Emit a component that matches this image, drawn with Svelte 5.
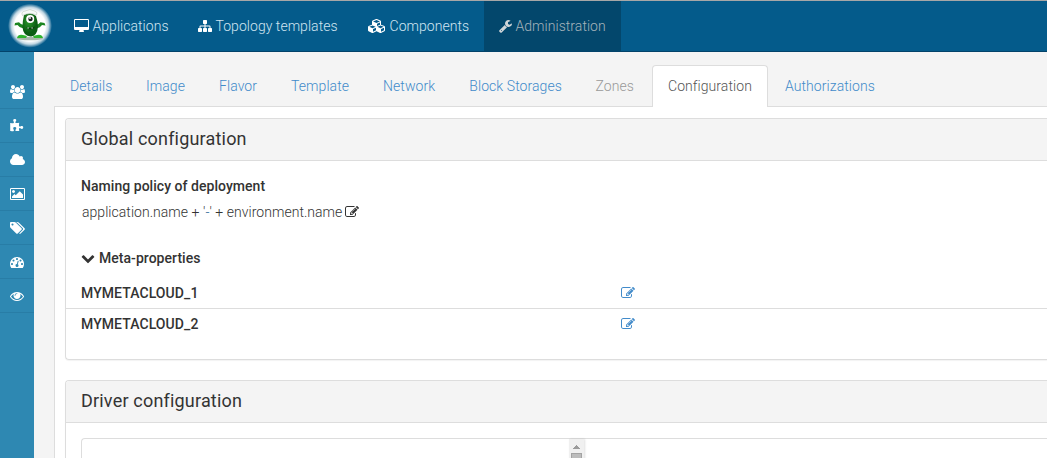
<script>
  const icons = {
    desktop: ['-64 0 1920 1792', 15, 'M1728 992v-832q0-13-9.5-22.5t-22.5-9.5h-1600q-13 0-22.5 9.5t-9.5 22.5v832q0 13 9.5 22.5t22.5 9.5h1600q13 0 22.5-9.5t9.5-22.5zm128-832v1088q0 66-47 113t-113 47h-544q0 37 16 77.5t32 71 16 43.5q0 26-19 45t-45 19h-512q-26 0-45-19t-19-45q0-14 16-44t32-70 16-78h-544q-66 0-113-47t-47-113v-1088q0-66 47-113t113-47h1600q66 0 113 47t47 113z'],
    sitemap: ['0 0 1792 1792', 14, 'M1792 1248v320q0 40-28 68t-68 28h-320q-40 0-68-28t-28-68v-320q0-40 28-68t68-28h96v-192h-512v192h96q40 0 68 28t28 68v320q0 40-28 68t-68 28h-320q-40 0-68-28t-28-68v-320q0-40 28-68t68-28h96v-192h-512v192h96q40 0 68 28t28 68v320q0 40-28 68t-68 28h-320q-40 0-68-28t-28-68v-320q0-40 28-68t68-28h96v-192q0-52 38-90t90-38h512v-192h-96q-40 0-68-28t-28-68v-320q0-40 28-68t68-28h320q40 0 68 28t28 68v320q0 40-28 68t-68 28h-96v192h512q52 0 90 38t38 90v192h96q40 0 68 28t28 68z'],
    cubes: ['0 0 2304 1792', 18, 'M640 1632l384-192v-314l-384 164v342zm-64-454l404-173-404-173-404 173zm1088 454l384-192v-314l-384 164v342zm-64-454l404-173-404-173-404 173zm-448-293l384-165v-266l-384 164v267zm-64-379l441-189-441-189-441 189zm1088 518v416q0 36-19 67t-52 47l-448 224q-25 14-57 14t-57-14l-448-224q-4-2-7-4-2 2-7 4l-448 224q-25 14-57 14t-57-14l-448-224q-33-16-52-47t-19-67v-416q0-38 21.5-70t56.5-48l434-186v-400q0-38 21.5-70t56.5-48l448-192q23-10 50-10t50 10l448 192q35 16 56.5 48t21.5 70v400l434 186q36 16 57 48t21 70z'],
    wrench: ['64 0 1664 1792', 13, 'M448 1472q0-26-19-45t-45-19-45 19-19 45 19 45 45 19 45-19 19-45zm644-420l-682 682q-37 37-90 37-52 0-91-37l-106-108q-38-36-38-90 0-53 38-91l681-681q39 98 114.5 173.5t173.5 114.5zm634-435q0 39-23 106-47 134-164.5 217.5t-258.5 83.5q-185 0-316.5-131.5t-131.5-316.5 131.5-316.5 316.5-131.5q58 0 121.5 16.5t107.5 46.5q16 11 16 28t-16 28l-293 169v224l193 107q5-3 79-48.5t135.5-81 70.5-35.5q15 0 23.5 10t8.5 25z'],
    users: ['0 0 1920 1792', 15, 'M593 896q-162 5-265 128h-134q-82 0-138-40.5t-56-118.5q0-353 124-353 6 0 43.5 21t97.5 42.5 119 21.5q67 0 133-23-5 37-5 66 0 139 81 256zm1071 637q0 120-73 189.5t-194 69.5h-874q-121 0-194-69.5t-73-189.5q0-53 3.5-103.5t14-109 26.5-108.5 43-97.5 62-81 85.5-53.5 111.5-20q10 0 43 21.5t73 48 107 48 135 21.5 135-21.5 107-48 73-48 43-21.5q61 0 111.5 20t85.5 53.5 62 81 43 97.5 26.5 108.5 14 109 3.5 103.5zm-1024-1277q0 106-75 181t-181 75-181-75-75-181 75-181 181-75 181 75 75 181zm704 384q0 159-112.5 271.5t-271.5 112.5-271.5-112.5-112.5-271.5 112.5-271.5 271.5-112.5 271.5 112.5 112.5 271.5zm576 225q0 78-56 118.5t-138 40.5h-134q-103-123-265-128 81-117 81-256 0-29-5-66 66 23 133 23 59 0 119-21.5t97.5-42.5 43.5-21q124 0 124 353zm-128-609q0 106-75 181t-181 75-181-75-75-181 75-181 181-75 181 75 75 181z'],
    puzzle: ['64 0 1792 1792', 14, 'M1755 1083q0 81-44.5 135t-123.5 54q-41 0-77.5-17.5t-59-38-56.5-38-71-17.5q-110 0-110 124 0 39 16 115t15 115v5q-22 0-33 1-34 3-97.5 11.5t-115.5 13.5-98 5q-61 0-103-26.5t-42-83.5q0-37 17.5-71t38-56.5 38-59 17.5-77.5q0-79-54-123.5t-135-44.5q-84 0-143 45.5t-59 127.5q0 43 15 83t33.5 64.5 33.5 53 15 50.5q0 45-46 89-37 35-117 35-95 0-245-24-9-2-27.5-4t-27.5-4l-13-2q-1 0-3-1-2 0-2-1v-1024q2 1 17.5 3.5t34 5 21.5 3.5q150 24 245 24 80 0 117-35 46-44 46-89 0-22-15-50.5t-33.5-53-33.5-64.5-15-83q0-82 59-127.5t144-45.5q80 0 134 44.5t54 123.5q0 41-17.5 77.5t-38 59-38 56.5-17.5 71q0 57 42 83.5t103 26.5q64 0 180-15t163-17v2q-1 2-3.5 17.5t-5 34-3.5 21.5q-24 150-24 245 0 80 35 117 44 46 89 46 22 0 50.5-15t53-33.5 64.5-33.5 83-15q82 0 127.5 59t45.5 143z'],
    cloud: ['64 0 1920 1792', 15, 'M1984 1152q0 159-112.5 271.5t-271.5 112.5h-1088q-185 0-316.5-131.5t-131.5-316.5q0-132 71-241.5t187-163.5q-2-28-2-43 0-212 150-362t362-150q158 0 286.5 88t187.5 230q70-62 166-62 106 0 181 75t75 181q0 75-41 138 129 30 213 134.5t84 239.5z'],
    picture: ['-64 0 1920 1792', 15, 'M576 576q0 80-56 136t-136 56-136-56-56-136 56-136 136-56 136 56 56 136zm1024 384v448h-1408v-192l320-320 160 160 512-512zm96-704h-1600q-13 0-22.5 9.5t-9.5 22.5v1216q0 13 9.5 22.5t22.5 9.5h1600q13 0 22.5-9.5t9.5-22.5v-1216q0-13-9.5-22.5t-22.5-9.5zm160 32v1216q0 66-47 113t-113 47h-1600q-66 0-113-47t-47-113v-1216q0-66 47-113t113-47h1600q66 0 113 47t47 113z'],
    tags: ['0 0 1920 1792', 15, 'M448 448q0-53-37.5-90.5t-90.5-37.5-90.5 37.5-37.5 90.5 37.5 90.5 90.5 37.5 90.5-37.5 37.5-90.5zm1067 576q0 53-37 90l-491 492q-39 37-91 37-53 0-90-37l-715-716q-38-37-64.5-101t-26.5-117v-416q0-52 38-90t90-38h416q53 0 117 26.5t102 64.5l715 714q37 39 37 91zm384 0q0 53-37 90l-491 492q-39 37-91 37-36 0-59-14t-53-45l470-470q37-37 37-90 0-52-37-91l-715-714q-38-38-102-64.5t-117-26.5h224q53 0 117 26.5t102 64.5l715 714q37 39 37 91z'],
    gauge: ['0 0 1792 1792', 14, 'M384 1152q0-53-37.5-90.5t-90.5-37.5-90.5 37.5-37.5 90.5 37.5 90.5 90.5 37.5 90.5-37.5 37.5-90.5zm192-448q0-53-37.5-90.5t-90.5-37.5-90.5 37.5-37.5 90.5 37.5 90.5 90.5 37.5 90.5-37.5 37.5-90.5zm428 481l101-382q6-26-7.5-48.5t-38.5-29.5-48 6.5-30 39.5l-101 382q-60 5-107 43.5t-63 98.5q-20 77 20 146t117 89 146-20 89-117q16-60-6-117t-72-91zm660-33q0-53-37.5-90.5t-90.5-37.5-90.5 37.5-37.5 90.5 37.5 90.5 90.5 37.5 90.5-37.5 37.5-90.5zm-640-640q0-53-37.5-90.5t-90.5-37.5-90.5 37.5-37.5 90.5 37.5 90.5 90.5 37.5 90.5-37.5 37.5-90.5zm448 192q0-53-37.5-90.5t-90.5-37.5-90.5 37.5-37.5 90.5 37.5 90.5 90.5 37.5 90.5-37.5 37.5-90.5zm320 448q0 261-141 483-19 29-54 29h-1402q-35 0-54-29-141-221-141-483 0-182 71-348t191-286 286-191 348-71 348 71 286 191 191 286 71 348z'],
    eye: ['0 0 1792 1792', 14, 'M1664 960q-152-236-381-353 61 104 61 225 0 185-131.5 316.5t-316.5 131.5-316.5-131.5-131.5-316.5q0-121 61-225-229 117-381 353 133 205 333.5 326.5t434.5 121.5 434.5-121.5 333.5-326.5zm-720-384q0-20-14-34t-34-14q-125 0-214.5 89.5t-89.5 214.5q0 20 14 34t34 14 34-14 14-34q0-86 61-147t147-61q20 0 34-14t14-34zm848 384q0 34-20 69-140 230-376.5 368.5t-499.5 138.5-499.5-139-376.5-368q-20-35-20-69t20-69q140-229 376.5-368t499.5-139 499.5 139 376.5 368q20 35 20 69z'],
    edit: ['0 0 1792 1792', 14, 'M888 1184l116-116-152-152-116 116v56h96v96h56zm440-720q-16-16-33 1l-350 350q-17 17-1 33t33-1l350-350q17-17 1-33zm80 594v190q0 119-84.5 203.5t-203.5 84.5h-832q-119 0-203.5-84.5t-84.5-203.5v-832q0-119 84.5-203.5t203.5-84.5h832q63 0 117 25 15 7 18 23 3 17-9 29l-49 49q-14 14-32 8-23-6-45-6h-832q-66 0-113 47t-47 113v832q0 66 47 113t113 47h832q66 0 113-47t47-113v-126q0-13 9-22l64-64q15-15 35-7t20 29zm-96-738l288 288-672 672h-288v-288zm444 132l-92 92-288-288 92-92q28-28 68-28t68 28l152 152q28 28 28 68t-28 68z'],
    chevron: ['0 0 1792 1792', 14, 'M1683 808l-742 741q-19 19-45 19t-45-19l-742-741q-19-19-19-45.5t19-45.5l166-165q19-19 45-19t45 19l531 531 531-531q19-19 45-19t45 19l166 165q19 19 19 45.5t-19 45.5z']
  };
  const nav = [
    { icon: 'desktop', label: 'Applications', width: 124 },
    { icon: 'sitemap', label: 'Topology templates', width: 170 },
    { icon: 'cubes', label: 'Components', width: 131 },
    { icon: 'wrench', label: 'Administration', width: 137, active: true }
  ];
  const side = ['users', 'puzzle', 'cloud', 'picture', 'tags', 'gauge', 'eye'];
  const tabs = [
    ['Details', 76], ['Image', 73], ['Flavor', 72], ['Template', 92], ['Network', 86.3],
    ['Block Storages', 126.2], ['Zones', 72.5], ['Configuration', 116], ['Authorizations', 124]
  ];
  const metas = ['MYMETACLOUD_1', 'MYMETACLOUD_2'];
</script>

{#snippet icon(name)}
  <svg class="icon" viewBox={icons[name][0]} width={icons[name][1]} height="14"><path d={icons[name][2]} fill="currentColor" /></svg>
{/snippet}

<div class="page">
  <header>
    <div class="logo">
      <svg viewBox="0 0 50 50" width="50" height="50">
        <defs>
          <radialGradient id="halo">
            <stop offset=".7" stop-color="#fff" />
            <stop offset=".84" stop-color="#fff" stop-opacity=".75" />
            <stop offset="1" stop-color="#fff" stop-opacity="0" />
          </radialGradient>
          <radialGradient id="skin" cx=".4" cy=".35">
            <stop offset="0" stop-color="#2d9a2c" />
            <stop offset="1" stop-color="#0b5c12" />
          </radialGradient>
        </defs>
        <circle cx="25" cy="24.7" r="22" fill="url(#halo)" />
        <ellipse cx="25" cy="37.5" rx="13" ry="1.7" fill="#a9b8aa" />
        <path d="M12 37q1-4 6-3l4 1-1 2zM38 37q-1-4-6-3l-4 1 1 2z" fill="#2fb32d" />
        <path d="M18.5 27.5q-4-.5-6-3.5l-3 .5.5-2.500 4-.7q1.500 2.500 5.500 3zM30.500 27.500q4.500-.5 6.500-3.500l3.500.5-1-2.500-4-.7q-2 2.500-5.500 3z" fill="#1b8520" />
        <path d="M19 14q6-4 12 1 2 6 2 11-1 9-7 9.500-8-.5-8.500-9.500 0-6 1.500-12z" fill="url(#skin)" />
        <path d="M17.500 14.500q-2-3.500 2.500-4.500 5-3 9.500 0 4 1 2 4-7-3-14 .5z" fill="#f5faf7" stroke="#b5c5bc" stroke-width=".6" />
        <circle cx="25.200" cy="18" r="4" fill="#fff" />
        <circle cx="25.500" cy="18" r="2.200" fill="#16251f" />
        <circle cx="25" cy="17" r=".9" fill="#fff" />
        <path d="M21 26q4 2 9-.5-1 3-4.500 3-3 0-4.500-2.500z" fill="#093d0c" />
        <path d="M22.500 26.500h1.200v1h-1.200zM26.500 26.500h1.200v1h-1.200z" fill="#fff" />
      </svg>
    </div>
    <nav>
      {#each nav as item}
        <a class:active={item.active} style:width="{item.width}px">{@render icon(item.icon)}<span>{item.label}</span></a>
      {/each}
    </nav>
  </header>
  <div class="body">
    <aside>
      {#each side as name}
        <div class="side-item">{@render icon(name)}</div>
      {/each}
    </aside>
    <main>
      <ul class="tabs">
        {#each tabs as [label, width]}
          <li class:current={label === 'Configuration'} class:disabled={label === 'Zones'} style:width="{width}px"><span>{label}</span></li>
        {/each}
      </ul>
      <div class="content">
        <section class="first">
          <h3>Global configuration</h3>
          <div class="inner">
            <div class="line strong">Naming policy of deployment</div>
            <div class="line policy"><span>application.name + '<b>-</b>' + environment.name</span>{@render icon('edit')}</div>
            <div class="line strong meta">{@render icon('chevron')}<span>Meta-properties</span></div>
          </div>
          {#each metas as meta}
            <div class="row"><span class="strong">{meta}</span><i>{@render icon('edit')}</i></div>
          {/each}
        </section>
        <section class="second">
          <h3>Driver configuration</h3>
          <div class="field">
            <div class="scroll">
              <svg width="16" height="20" viewBox="0 0 16 20"><path d="M4 10h7v-1h-1v-1h-1v-1h-1v-1h-1v1h-1v1h-1v1h-1z" fill="#9b9b9b" /><rect x="2.5" y="14.500" width="10" height="20" fill="#bcbcbc" stroke="#a3a3a3" /></svg>
            </div>
          </div>
        </section>
      </div>
    </main>
  </div>
</div>

<style>
  :global(body) { margin: 0; overflow: hidden; }
  * { box-sizing: border-box; }
  .page { width: 1047px; height: 458px; overflow: hidden; display: flex; flex-direction: column; background: #f4f4f4; color: #333; font: 300 14px/20px Roboto, sans-serif; letter-spacing: .04px; }
  .icon { display: block; flex: none; overflow: visible; }
  header { height: 52px; flex: none; display: flex; background: #045b8b; border-top: 1px solid #a7a7a7; border-bottom: 1px solid #03436a; }
  .logo { width: 59px; padding-left: 5px; }
  .logo svg { display: block; }
  nav { display: flex; }
  nav a { display: flex; padding: 15px 0 0 15px; gap: 3.5px; color: #d1e5f1; white-space: nowrap; }
  nav a .icon { margin-top: 3px; color: #fff; }
  nav a.active { background: #03476c; color: #a5b3bb; }
  nav a.active .icon { color: #d0d5d8; }
  .body { flex: 1; display: flex; min-height: 0; }
  aside { width: 34px; flex: none; padding-top: 23px; background: #2e88b2; }
  .side-item { height: 34px; display: flex; justify-content: center; align-items: center; color: #fff; border-bottom: 1px solid #287da6; }
  main { flex: 1; min-width: 0; padding: 13px 0 0 20px; display: flex; flex-direction: column; }
  .tabs { height: 42px; flex: none; list-style: none; margin: 0; padding: 0; display: flex; border-bottom: 1px solid #ddd; color: #428bca; letter-spacing: .07px; }
  .tabs li { height: 42px; flex: none; padding: 11px 0 0 16px; white-space: nowrap; }
  .tabs li.disabled { color: #999; }
  .tabs li:last-child { padding-left: 17px; }
  .tabs li.current { padding: 10px 0 0 15px; color: #555; background: #fff; border: 1px solid #ddd; border-bottom: 0; border-radius: 4px 4px 0 0; }
  .content { flex: 1; border-left: 1px solid #ddd; background: #fff; padding: 11px 0 0 10px; }
  section { border: 1px solid #ddd; border-right: 0; border-radius: 4px 0 0 4px; box-shadow: 0 1px 1px rgba(0, 0, 0, .05); overflow: hidden; }
  .first { height: 242px; margin-bottom: 20px; }
  .second { height: 200px; }
  h3 { height: 42px; margin: 0; padding: 10px 15px; background: #f4f4f4; border-bottom: 1px solid #ddd; font: 400 18px/20px Roboto, sans-serif; letter-spacing: .19px; }
  .inner { padding: 15px 15px 0; height: 117px; }
  .line { display: flex; height: 20px; }
  .strong { font-weight: 500; }
  .policy { margin: 6px 0 26px 1px; gap: 3px; }
  .policy b { font-weight: 300; color: #2a6496; }
  .line .icon { margin-top: 3px; }
  .meta { gap: 4px; }
  .row { height: 31px; display: flex; padding: 5px 0 0 15px; border-bottom: 1px solid #ddd; }
  .row:last-child { border: 0; }
  .row .strong { width: 540px; letter-spacing: .08px; }
  .row i { padding-top: 3px; color: #428bca; }
  .field { margin: 15px 0 0 15px; height: 80px; border: 1px solid #ddd; border-right: 0; border-radius: 4px 0 0 0; display: flex; padding-left: 487px; }
  .scroll { width: 15px; background: #f0f0f0; box-shadow: 1px 0 2px rgba(0, 0, 0, .12); }
  .scroll svg { display: block; }
</style>
